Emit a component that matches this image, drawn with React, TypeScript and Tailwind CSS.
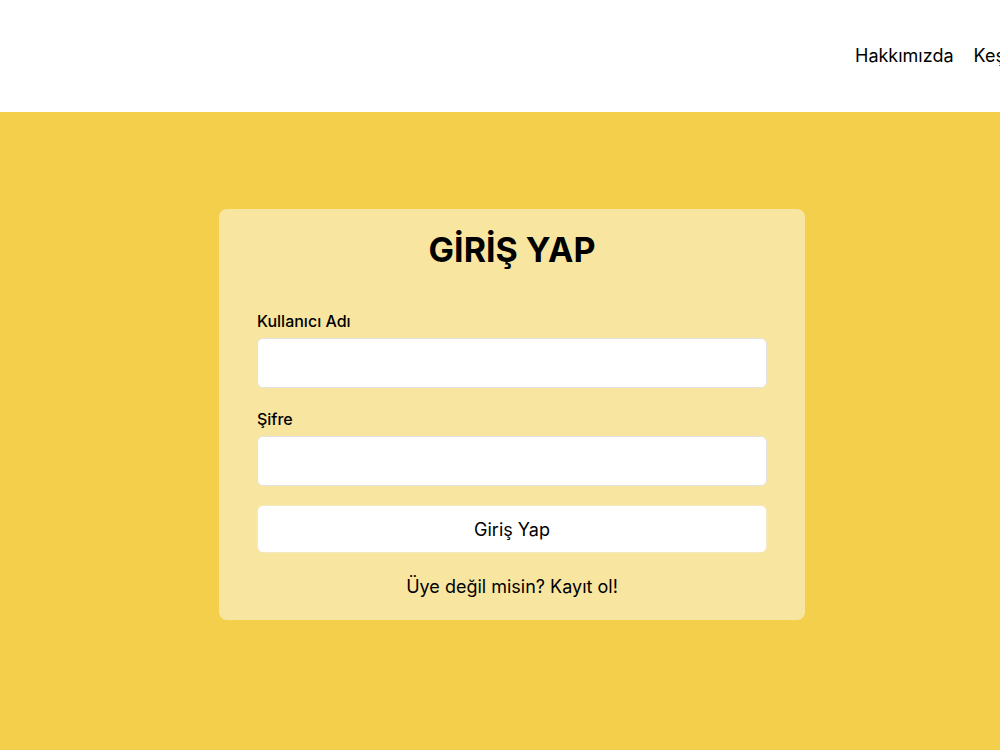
import React, { useState } from 'react';

const App: React.FC = () => {
  const [username, setUsername] = useState('');
  const [password, setPassword] = useState('');

  return (
    <div className="min-h-[750px] flex flex-col bg-[#f3cf4b] font-['Inter',_'Liberation_Sans',_sans-serif] text-black">
      {/* Header */}
      <header className="h-[112px] bg-white flex items-center pl-[855px] gap-5 overflow-hidden whitespace-nowrap">
        <a href="#" className="text-[18px] leading-none">Hakkımızda</a>
        <a href="#" className="text-[18px] leading-none">Keşfet</a>
        <a href="#" className="text-[18px] leading-none">İletişim</a>
      </header>

      {/* Login card */}
      <main className="flex-1 flex justify-center pt-[97px] pl-6">
        <form
          className="w-[586px] h-[411px] bg-[#f8e6a0] rounded-lg px-[38px] pt-[21px]"
          onSubmit={(e) => e.preventDefault()}
        >
          <h1 className="text-[34px] font-bold text-center leading-[40px]">GİRİŞ YAP</h1>

          <label htmlFor="username" className="block mt-[41px] text-[16px] font-medium leading-[20px]">
            Kullanıcı Adı
          </label>
          <input
            id="username"
            type="text"
            value={username}
            onChange={(e) => setUsername(e.target.value)}
            className="block w-full h-[50px] mt-[7px] bg-white rounded-md border border-[#e2e2e2] px-3 outline-none"
          />

          <label htmlFor="password" className="block mt-[21px] text-[16px] font-medium leading-[20px]">
            Şifre
          </label>
          <input
            id="password"
            type="password"
            value={password}
            onChange={(e) => setPassword(e.target.value)}
            className="block w-full h-[50px] mt-[7px] bg-white rounded-md border border-[#e2e2e2] px-3 outline-none"
          />

          <button
            type="submit"
            className="block w-full h-[48px] mt-[19px] bg-white rounded-md text-[18px] border border-[#f3e8c0]"
          >
            Giriş Yap
          </button>

          <p className="mt-[23px] text-center text-[18px] leading-[22px]">Üye değil misin? Kayıt ol!</p>
        </form>
      </main>
    </div>
  );
};

export default App;
